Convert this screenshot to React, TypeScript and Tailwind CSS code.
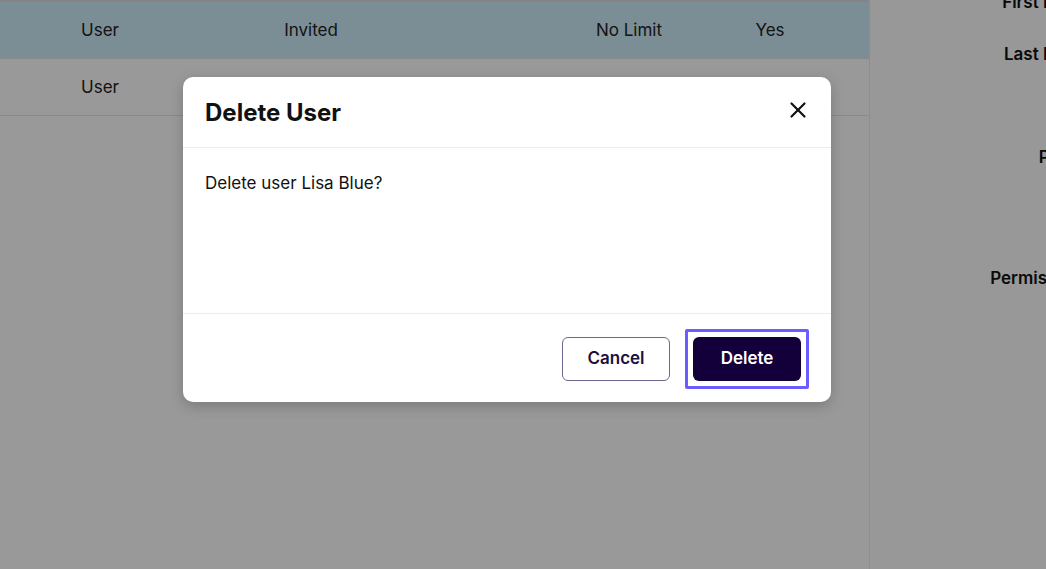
import { X } from "lucide-react";

const rows = [
  { role: "User", status: "Invited", limit: "No Limit", active: "Yes", selected: true },
  { role: "User", status: "", limit: "", active: "", selected: false },
];

function Row({ role, status, limit, active, selected }: (typeof rows)[number]) {
  return (
    <div
      className={
        "flex h-[57px] items-center border-b border-[#e4e4e4] text-[17px] text-[#222] " +
        (selected ? "bg-[#cdedfa]" : "bg-white")
      }
    >
      <div className="w-[200px] pt-[2px] text-center">{role}</div>
      <div className="w-[222px] pt-[2px] text-center">{status}</div>
      <div className="w-[157px]" />
      <div className="w-[100px] pt-[2px] text-center">{limit}</div>
      <div className="w-[50px]" />
      <div className="w-[82px] pt-[2px] text-center">{active}</div>
    </div>
  );
}

export default function App() {
  return (
    <div className="relative h-[569px] w-[1046px] overflow-hidden bg-white font-['Inter',sans-serif]">
      <div className="flex h-full">
        <section className="w-[869px] shrink-0 border-t-2 border-[#dcdcdc]">
          {rows.map((r, i) => (
            <Row key={i} {...r} />
          ))}
        </section>
        <aside className="min-w-0 flex-1 overflow-hidden border-l border-[#ececec] bg-[#fcfdfc]">
          <div className="flex w-[221px] flex-col items-end text-[17px] font-semibold text-[#111]">
            <div className="mt-[-10px] whitespace-nowrap">First Name</div>
            <div className="mt-[26px] whitespace-nowrap">Last Name</div>
            <div className="mt-[78px] whitespace-nowrap">Phone</div>
            <div className="mt-[95px] whitespace-nowrap">Permissions</div>
          </div>
        </aside>
      </div>

      {/* overlay */}
      <div className="absolute inset-0 bg-black/40" />

      <div className="absolute left-[183px] top-[77px] flex h-[325px] w-[648px] flex-col rounded-[10px] bg-white shadow-[0_4px_14px_rgba(0,0,0,0.2)]">
        <header className="flex h-[71px] items-center justify-between border-b border-[#ececec] pl-[22px] pr-[20px]">
          <h2 className="pt-[2px] text-[24px] font-bold text-[#111]">Delete User</h2>
          <button className="mt-[-5px] text-[#111]">
            <X size={26} strokeWidth={2} />
          </button>
        </header>
        <div className="flex-1 px-[22px] pt-[23px] text-[17px] text-[#111]">Delete user Lisa Blue?</div>
        <footer className="flex h-[89px] items-center justify-end gap-[15px] border-t border-[#ececec] pr-[22px] pt-[2px]">
          <button className="h-[44px] w-[108px] rounded-[6px] border border-[#6c6790] text-[17px] font-semibold text-[#1a1040]">
            Cancel
          </button>
          <div className="rounded-[2px] border-[3px] border-[#6a5cff] p-[5px]">
            <button className="block h-[44px] w-[108px] rounded-[6px] bg-[#13003b] text-[17px] font-semibold text-white">
              Delete
            </button>
          </div>
        </footer>
      </div>
    </div>
  );
}
